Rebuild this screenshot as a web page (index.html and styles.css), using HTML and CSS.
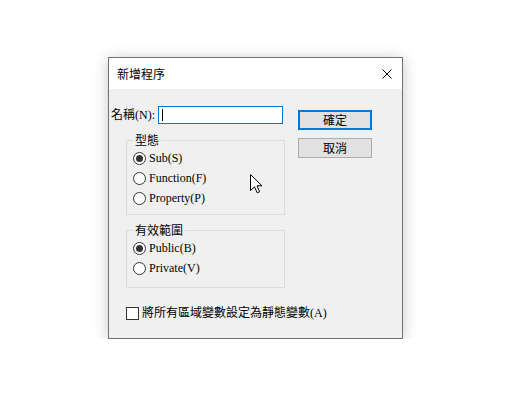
FILE: index.html
```html
<!DOCTYPE html>
<html>
    <head>
        <title>新增程序</title>
        <meta charset="utf-8">
        <link rel="stylesheet" href="styles.css">
    </head>
    <body>
        <div class="dialog">
            <div class="titlebar">
                <span class="title">新增程序</span>
                <svg class="close" width="10" height="10" viewBox="0 0 10 10">
                    <path d="M0.5 0.5 L9.5 9.5 M9.5 0.5 L0.5 9.5" stroke="#000" stroke-width="1" fill="none"/>
                </svg>
            </div>
            <div class="dialog-body">
                <div class="main">
                    <div class="left">
                        <div class="name-row">
                            <span class="name-label">名稱(N):</span>
                            <div class="textbox"><span class="caret"></span></div>
                        </div>
                        <fieldset class="group group-type">
                            <legend>型態</legend>
                            <div class="option"><span class="radio checked"></span>Sub(S)</div>
                            <div class="option"><span class="radio"></span>Function(F)</div>
                            <div class="option"><span class="radio"></span>Property(P)</div>
                        </fieldset>
                        <fieldset class="group group-scope">
                            <legend>有效範圍</legend>
                            <div class="option"><span class="radio checked"></span>Public(B)</div>
                            <div class="option"><span class="radio"></span>Private(V)</div>
                        </fieldset>
                    </div>
                    <div class="buttons">
                        <div class="btn btn-default">確定</div>
                        <div class="btn">取消</div>
                    </div>
                </div>
                <div class="check-row"><span class="checkbox"></span>將所有區域變數設定為靜態變數(A)</div>
            </div>
        </div>

        <!-- mouse pointer over the dialog -->
        <svg class="cursor" width="13" height="20" viewBox="0 0 13 20">
            <path d="M0.5 0.5 L0.5 16.5 L4.5 12.8 L7.2 18.8 L9.6 17.8 L7 11.8 L12 11.8 Z" fill="#fff" stroke="#000" stroke-width="1" stroke-linejoin="miter"/>
        </svg>
    </body>
</html>
```

FILE: styles.css
```css
body{
      margin: 0;
      background: #fff;
      font-family: "Liberation Serif", "Noto Sans CJK TC", serif;
      font-size: 12px;
      color: #000;
}

.dialog{
      margin: 57px 0 0 108px;
      width: 295px;
      height: 282px;
      box-sizing: border-box;
      border: 1px solid #707070;
      background: #f0f0f0;
      box-shadow: 0 2px 14px rgba(0, 0, 0, 0.22);
      display: flex;
      flex-direction: column;
}

.titlebar{
      height: 31px;
      background: #fff;
      display: flex;
      align-items: center;
      justify-content: space-between;
      padding: 0 10px 0 8px;
}
.title{
      font-family: "Noto Sans CJK TC", sans-serif;
      font-size: 12px;
      line-height: 16px;
}
.close{display: block;}

.dialog-body{
      flex: 1;
      padding-left: 2px;
}
.main{
      display: flex;
      align-items: flex-start;
}
.left{
      width: 174px;
      margin-top: 17px;
}

.name-row{
      display: flex;
      align-items: center;
      height: 18px;
}
.name-label{
      width: 47px;
      line-height: 16px;
}
.textbox{
      width: 125px;
      height: 18px;
      box-sizing: border-box;
      border: 1px solid #0078d7;
      background: #fff;
      display: flex;
      align-items: center;
}
.caret{
      width: 1px;
      height: 12px;
      margin-left: 3px;
      background: #000;
}

.group{
      width: 159px;
      box-sizing: border-box;
      margin: 8px 0 0 15px;
      padding: 0 6px 6px;
      border: 1px solid #dcdcdc;
      min-width: 0;
}
.group-scope{
      margin-top: 7px;
      padding-bottom: 9px;
}
.group legend{
      padding: 0 2px;
      line-height: 16px;
      font-family: "Noto Sans CJK TC", sans-serif;
}

.option{
      height: 20px;
      display: flex;
      align-items: center;
      line-height: 16px;
}
.radio{
      width: 13px;
      height: 13px;
      box-sizing: border-box;
      border: 1px solid #333;
      border-radius: 50%;
      background: #fff;
      margin-right: 3px;
      display: flex;
      align-items: center;
      justify-content: center;
}
.radio.checked::after{
      content: "";
      width: 7px;
      height: 7px;
      border-radius: 50%;
      background: #333;
}

.buttons{
      margin: 21px 0 0 13px;
      display: flex;
      flex-direction: column;
      gap: 8px;
}
.btn{
      width: 74px;
      height: 20px;
      box-sizing: border-box;
      border: 1px solid #adadad;
      background: #e1e1e1;
      font-family: "Noto Sans CJK TC", sans-serif;
      display: flex;
      align-items: center;
      justify-content: center;
      line-height: 16px;
}
.btn-default{border: 2px solid #0078d7;}

.check-row{
      margin: 17px 0 0 15px;
      height: 16px;
      display: flex;
      align-items: center;
      line-height: 16px;
}
.checkbox{
      width: 13px;
      height: 13px;
      box-sizing: border-box;
      border: 1px solid #333;
      background: #fff;
      margin-right: 3px;
}

.cursor{
      position: absolute;
      left: 250px;
      top: 174px;
}
```
